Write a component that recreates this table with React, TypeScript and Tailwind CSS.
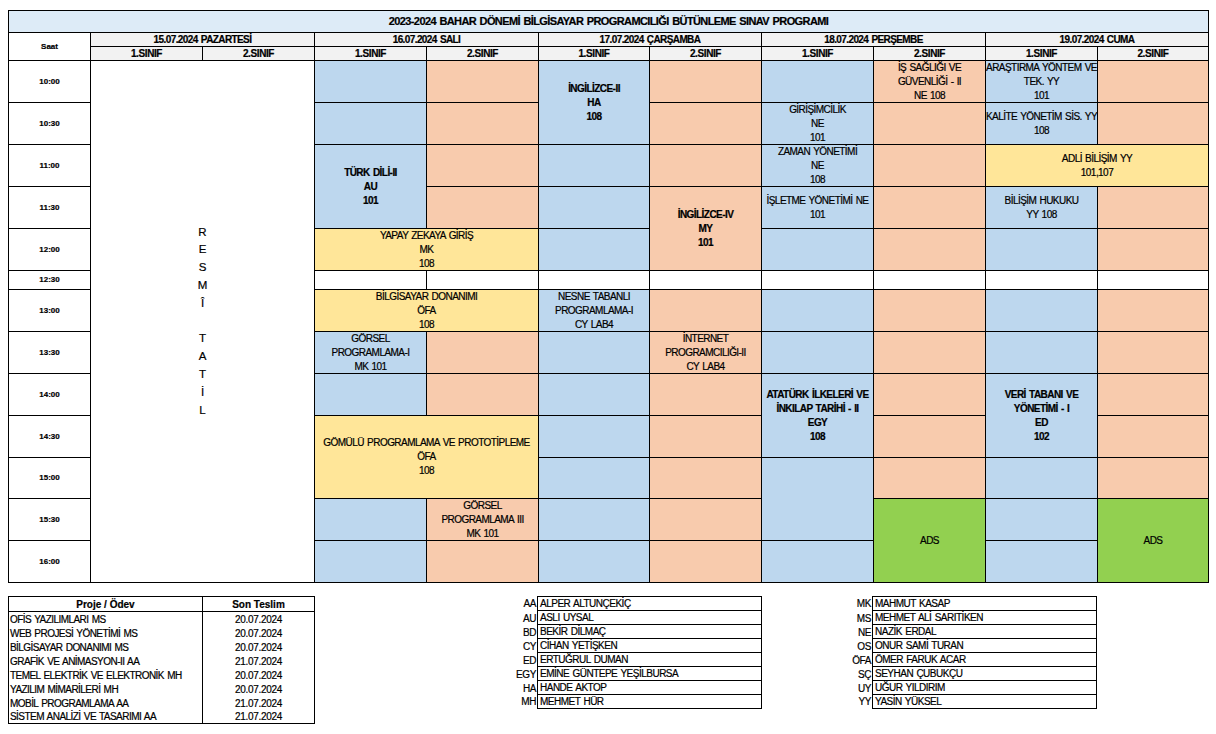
import React from 'react';

const B = 'bg-[#bdd7ee]';
const P = 'bg-[#f8cbad]';
const Y = 'bg-[#ffe699]';
const G = 'bg-[#92d050]';
const W = 'bg-white';

type Cell = { pos: string; bg: string; lines?: string[]; bold?: boolean };

const cells: Cell[] = [
  // 16.07 SALI - 1.SINIF
  { pos: 'col-start-4 row-start-4', bg: B },
  { pos: 'col-start-4 row-start-5', bg: B },
  { pos: 'col-start-4 row-start-6 row-span-2', bg: B, lines: ['TÜRK DİLİ-II', 'AU', '101'], bold: true },
  { pos: 'col-start-4 col-span-2 row-start-8', bg: Y, lines: ['YAPAY ZEKAYA GİRİŞ', 'MK', '108'] },
  { pos: 'col-start-4 row-start-9', bg: W },
  { pos: 'col-start-4 col-span-2 row-start-10', bg: Y, lines: ['BİLGİSAYAR DONANIMI', 'ÖFA', '108'] },
  { pos: 'col-start-4 row-start-11', bg: B, lines: ['GÖRSEL', 'PROGRAMLAMA-I', 'MK 101'] },
  { pos: 'col-start-4 row-start-12', bg: B },
  { pos: 'col-start-4 col-span-2 row-start-13 row-span-2', bg: Y, lines: ['GÖMÜLÜ PROGRAMLAMA VE PROTOTİPLEME', 'ÖFA', '108'] },
  { pos: 'col-start-4 row-start-15', bg: B },
  { pos: 'col-start-4 row-start-16', bg: B },
  // SALI - 2.SINIF
  { pos: 'col-start-5 row-start-4', bg: P },
  { pos: 'col-start-5 row-start-5', bg: P },
  { pos: 'col-start-5 row-start-6', bg: P },
  { pos: 'col-start-5 row-start-7', bg: P },
  { pos: 'col-start-5 row-start-9', bg: W },
  { pos: 'col-start-5 row-start-11', bg: P },
  { pos: 'col-start-5 row-start-12', bg: P },
  { pos: 'col-start-5 row-start-15', bg: P, lines: ['GÖRSEL', 'PROGRAMLAMA III', 'MK 101'] },
  { pos: 'col-start-5 row-start-16', bg: P },
  // 17.07 ÇARŞAMBA - 1.SINIF
  { pos: 'col-start-6 row-start-4 row-span-2', bg: B, lines: ['İNGİLİZCE-II', 'HA', '108'], bold: true },
  { pos: 'col-start-6 row-start-6', bg: B },
  { pos: 'col-start-6 row-start-7', bg: B },
  { pos: 'col-start-6 row-start-8', bg: B },
  { pos: 'col-start-6 row-start-9', bg: W },
  { pos: 'col-start-6 row-start-10', bg: B, lines: ['NESNE TABANLI', 'PROGRAMLAMA-I', 'CY LAB4'] },
  { pos: 'col-start-6 row-start-11', bg: B },
  { pos: 'col-start-6 row-start-12', bg: B },
  { pos: 'col-start-6 row-start-13', bg: B },
  { pos: 'col-start-6 row-start-14', bg: B },
  { pos: 'col-start-6 row-start-15', bg: B },
  { pos: 'col-start-6 row-start-16', bg: B },
  // ÇARŞAMBA - 2.SINIF
  { pos: 'col-start-7 row-start-4', bg: P },
  { pos: 'col-start-7 row-start-5', bg: P },
  { pos: 'col-start-7 row-start-6', bg: P },
  { pos: 'col-start-7 row-start-7 row-span-2', bg: P, lines: ['İNGİLİZCE-IV', 'MY', '101'], bold: true },
  { pos: 'col-start-7 row-start-9', bg: W },
  { pos: 'col-start-7 row-start-10', bg: P },
  { pos: 'col-start-7 row-start-11', bg: P, lines: ['İNTERNET', 'PROGRAMCILIĞI-II', 'CY LAB4'] },
  { pos: 'col-start-7 row-start-12', bg: P },
  { pos: 'col-start-7 row-start-13', bg: P },
  { pos: 'col-start-7 row-start-14', bg: P },
  { pos: 'col-start-7 row-start-15', bg: P },
  { pos: 'col-start-7 row-start-16', bg: P },
  // 18.07 PERŞEMBE - 1.SINIF
  { pos: 'col-start-8 row-start-4', bg: B },
  { pos: 'col-start-8 row-start-5', bg: B, lines: ['GİRİŞİMCİLİK', 'NE', '101'] },
  { pos: 'col-start-8 row-start-6', bg: B, lines: ['ZAMAN YÖNETİMİ', 'NE', '108'] },
  { pos: 'col-start-8 row-start-7', bg: B, lines: ['İŞLETME YÖNETİMİ NE', '101'] },
  { pos: 'col-start-8 row-start-8', bg: B },
  { pos: 'col-start-8 row-start-9', bg: W },
  { pos: 'col-start-8 row-start-10', bg: B },
  { pos: 'col-start-8 row-start-11', bg: B },
  { pos: 'col-start-8 row-start-12 row-span-2', bg: B, lines: ['ATATÜRK İLKELERİ VE', 'İNKILAP TARİHİ - II', 'EGY', '108'], bold: true },
  { pos: 'col-start-8 row-start-14 row-span-2', bg: B },
  { pos: 'col-start-8 row-start-16', bg: B },
  // PERŞEMBE - 2.SINIF
  { pos: 'col-start-9 row-start-4', bg: P, lines: ['İŞ SAĞLIĞI VE', 'GÜVENLİĞİ - II', 'NE 108'] },
  { pos: 'col-start-9 row-start-5', bg: P },
  { pos: 'col-start-9 row-start-6', bg: P },
  { pos: 'col-start-9 row-start-7', bg: P },
  { pos: 'col-start-9 row-start-8', bg: P },
  { pos: 'col-start-9 row-start-9', bg: W },
  { pos: 'col-start-9 row-start-10', bg: P },
  { pos: 'col-start-9 row-start-11', bg: P },
  { pos: 'col-start-9 row-start-12', bg: P },
  { pos: 'col-start-9 row-start-13', bg: P },
  { pos: 'col-start-9 row-start-14', bg: P },
  { pos: 'col-start-9 row-start-15 row-span-2', bg: G, lines: ['ADS'] },
  // 19.07 CUMA - 1.SINIF
  { pos: 'col-start-10 row-start-4', bg: B, lines: ['ARAŞTIRMA YÖNTEM VE', 'TEK. YY', '101'] },
  { pos: 'col-start-10 row-start-5', bg: B, lines: ['KALİTE YÖNETİM SİS. YY', '108'] },
  { pos: 'col-start-10 col-span-2 row-start-6', bg: Y, lines: ['ADLİ BİLİŞİM YY', '101,107'] },
  { pos: 'col-start-10 row-start-7', bg: B, lines: ['BİLİŞİM HUKUKU', 'YY 108'] },
  { pos: 'col-start-10 row-start-8', bg: B },
  { pos: 'col-start-10 row-start-9', bg: W },
  { pos: 'col-start-10 row-start-10', bg: B },
  { pos: 'col-start-10 row-start-11', bg: B },
  { pos: 'col-start-10 row-start-12 row-span-2', bg: B, lines: ['VERİ TABANI VE', 'YÖNETİMİ - I', 'ED', '102'], bold: true },
  { pos: 'col-start-10 row-start-14', bg: B },
  { pos: 'col-start-10 row-start-15', bg: B },
  { pos: 'col-start-10 row-start-16', bg: B },
  // CUMA - 2.SINIF
  { pos: 'col-start-11 row-start-4', bg: P },
  { pos: 'col-start-11 row-start-5', bg: P },
  { pos: 'col-start-11 row-start-7', bg: P },
  { pos: 'col-start-11 row-start-8', bg: P },
  { pos: 'col-start-11 row-start-9', bg: W },
  { pos: 'col-start-11 row-start-10', bg: P },
  { pos: 'col-start-11 row-start-11', bg: P },
  { pos: 'col-start-11 row-start-12', bg: P },
  { pos: 'col-start-11 row-start-13', bg: P },
  { pos: 'col-start-11 row-start-14', bg: P },
  { pos: 'col-start-11 row-start-15 row-span-2', bg: G, lines: ['ADS'] },
];

const times = [
  { t: '10:00', pos: 'row-start-4' },
  { t: '10:30', pos: 'row-start-5' },
  { t: '11:00', pos: 'row-start-6' },
  { t: '11:30', pos: 'row-start-7' },
  { t: '12:00', pos: 'row-start-8' },
  { t: '12:30', pos: 'row-start-9' },
  { t: '13:00', pos: 'row-start-10' },
  { t: '13:30', pos: 'row-start-11' },
  { t: '14:00', pos: 'row-start-12' },
  { t: '14:30', pos: 'row-start-13' },
  { t: '15:00', pos: 'row-start-14' },
  { t: '15:30', pos: 'row-start-15' },
  { t: '16:00', pos: 'row-start-16' },
];

const days = [
  { d: '15.07.2024 PAZARTESİ', pos: 'col-start-2' },
  { d: '16.07.2024 SALI', pos: 'col-start-4' },
  { d: '17.07.2024 ÇARŞAMBA', pos: 'col-start-6' },
  { d: '18.07.2024 PERŞEMBE', pos: 'col-start-8' },
  { d: '19.07.2024 CUMA', pos: 'col-start-10' },
];

const sinifCols = ['col-start-2', 'col-start-3', 'col-start-4', 'col-start-5', 'col-start-6', 'col-start-7', 'col-start-8', 'col-start-9', 'col-start-10', 'col-start-11'];

const tatil = ['R', 'E', 'S', 'M', 'Î', '\u00a0', 'T', 'A', 'T', 'İ', 'L'];

const projects = [
  ['OFİS YAZILIMLARI MS', '20.07.2024'],
  ['WEB PROJESİ YÖNETİMİ MS', '20.07.2024'],
  ['BİLGİSAYAR DONANIMI MS', '20.07.2024'],
  ['GRAFİK VE ANİMASYON-II AA', '21.07.2024'],
  ['TEMEL ELEKTRİK VE ELEKTRONİK MH', '20.07.2024'],
  ['YAZILIM MİMARİLERİ MH', '20.07.2024'],
  ['MOBİL PROGRAMLAMA AA', '21.07.2024'],
  ['SİSTEM ANALİZİ VE TASARIMI AA', '21.07.2024'],
];

const teachersA = [
  ['AA', 'ALPER ALTUNÇEKİÇ'],
  ['AU', 'ASLI UYSAL'],
  ['BD', 'BEKİR DİLMAÇ'],
  ['CY', 'CİHAN YETİŞKEN'],
  ['ED', 'ERTUĞRUL DUMAN'],
  ['EGY', 'EMİNE GÜNTEPE YEŞİLBURSA'],
  ['HA', 'HANDE AKTOP'],
  ['MH', 'MEHMET HÜR'],
];

const teachersB = [
  ['MK', 'MAHMUT KASAP'],
  ['MS', 'MEHMET ALİ SARITİKEN'],
  ['NE', 'NAZİK ERDAL'],
  ['OS', 'ONUR SAMİ TURAN'],
  ['ÖFA', 'ÖMER FARUK ACAR'],
  ['SÇ', 'SEYHAN ÇUBUKÇU'],
  ['UY', 'UĞUR YILDIRIM'],
  ['YY', 'YASİN YÜKSEL'],
];

// legend rows: 14px pitch, first row a bit taller because of the top line
const legendRowH = ['h-[15px]', 'h-[14px]', 'h-[14px]', 'h-[14px]', 'h-[14px]', 'h-[14px]', 'h-[14px]', 'h-[13px]'];

function Teachers({ list, codeW }: { list: string[][]; codeW: string }) {
  return (
    <>
      <div className={`${codeW} flex flex-col`}>
        {list.map(([code], i) => (
          <div key={code} className={`${legendRowH[i]} flex items-center justify-end pr-px tracking-[-0.4px]`}>{code}</div>
        ))}
      </div>
      <div className="w-[225px] border border-black flex flex-col">
        {list.map(([code, name], i) => (
          <div key={code} className={`${i === 0 ? 'h-[14px]' : legendRowH[i]} ${i < 7 ? 'border-b border-black' : ''} flex items-center pl-[2px] tracking-[-0.5px] [word-spacing:1px] whitespace-nowrap`}>{name}</div>
        ))}
      </div>
    </>
  );
}

export default function App() {
  return (
    <div className="w-[1216px] h-[734px] bg-white text-black font-['Liberation_Sans',Arial,sans-serif] [-webkit-text-stroke:0.2px_black] pt-[10px] pl-[8px] overflow-hidden">
      {/* SINAV PROGRAMI */}
      <div className="w-[1201px] grid bg-black p-px gap-px grid-cols-[81px_111px_111px_111px_111px_110px_111px_111px_111px_111px_110px] grid-rows-[21px_13px_13px_41px_41px_41px_41px_41px_18px_41px_41px_41px_41px_40px_41px_41px]">
        <div className="col-start-1 col-span-11 row-start-1 bg-[#ddebf7] flex items-center justify-center text-[11px] font-bold tracking-[-0.6px] [word-spacing:1px]">
          2023-2024 BAHAR DÖNEMİ BİLGİSAYAR PROGRAMCILIĞI BÜTÜNLEME SINAV PROGRAMI
        </div>
        <div className="col-start-1 row-start-2 row-span-2 bg-white flex items-center justify-center text-[8px] font-bold">Saat</div>
        {days.map((d) => (
          <div key={d.d} className={`${d.pos} col-span-2 row-start-2 bg-[#f2f2f2] flex items-center justify-center text-[10px] font-bold tracking-[-0.6px] [word-spacing:1px] whitespace-nowrap`}>{d.d}</div>
        ))}
        {sinifCols.map((c, i) => (
          <div key={c} className={`${c} row-start-3 bg-[#f2f2f2] flex items-center justify-center text-[10px] font-bold tracking-[-0.4px]`}>{i % 2 === 0 ? '1.SINIF' : '2.SINIF'}</div>
        ))}
        {times.map((t) => (
          <div key={t.t} className={`col-start-1 ${t.pos} bg-white flex items-center justify-center text-[8px] font-bold`}>{t.t}</div>
        ))}
        <div className="col-start-2 col-span-2 row-start-4 row-span-13 bg-white flex flex-col items-center justify-center text-[11.5px] leading-[17.8px]">
          {tatil.map((l, i) => <span key={i}>{l}</span>)}
        </div>
        {cells.map((c, i) => (
          <div key={i} className={`${c.pos} ${c.bg} flex flex-col items-center justify-center text-center text-[10px] leading-[14px] tracking-[-0.55px] [word-spacing:1px] ${c.bold ? 'font-bold' : ''}`}>
            {c.lines?.map((l, j) => <span key={j} className="whitespace-nowrap">{l}</span>)}
          </div>
        ))}
      </div>

      {/* PROJE / ÖDEV + HOCALAR */}
      <div className="flex items-start mt-[13px] text-[10px]">
        <div className="w-[307px] border border-black flex flex-col">
          <div className="h-[15px] flex border-b border-black font-bold">
            <div className="w-[194px] border-r border-black flex items-center justify-center">Proje / Ödev</div>
            <div className="flex-1 flex items-center justify-center">Son Teslim</div>
          </div>
          {projects.map(([p, d], i) => (
            <div key={p} className={`${i === 7 ? 'h-[13px]' : 'h-[14px]'} flex`}>
              <div className="w-[194px] border-r border-black flex items-center pl-px tracking-[-0.55px] [word-spacing:1px] whitespace-nowrap">{p}</div>
              <div className="flex-1 flex items-center justify-center tracking-[-0.3px]">{d}</div>
            </div>
          ))}
        </div>
        <div className="w-[111px]" />
        <Teachers list={teachersA} codeW="w-[111px]" />
        <Teachers list={teachersB} codeW="w-[110px]" />
      </div>
    </div>
  );
}
